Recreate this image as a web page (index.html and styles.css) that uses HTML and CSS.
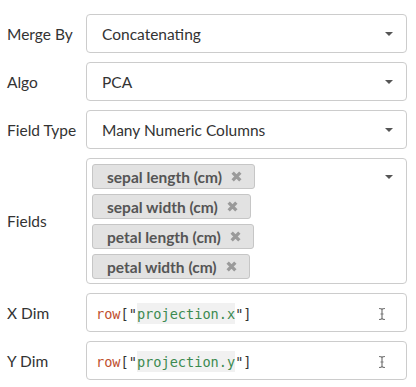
FILE: index.html
```html
<!DOCTYPE html>
<html lang="en">
    <head>
        <meta charset="utf-8"/>
        <title>Merge form</title>
        <link rel="stylesheet" href="styles.css">
    </head>
    <body>
        <div class="form">
            <label class="label">Merge By</label>
            <div class="select">
                <span>Concatenating</span>
                <i class="caret"></i>
            </div>

            <label class="label">Algo</label>
            <div class="select">
                <span>PCA</span>
                <i class="caret"></i>
            </div>

            <label class="label">Field Type</label>
            <div class="select">
                <span>Many Numeric Columns</span>
                <i class="caret"></i>
            </div>

            <label class="label">Fields</label>
            <div class="select multi">
                <div class="tags">
                    <div class="tag"><span>sepal length (cm)</span><svg class="x" viewBox="0 0 10 10"><path d="M1.5 1.5L8.5 8.5M8.5 1.5L1.5 8.5"/></svg></div>
                    <div class="tag"><span>sepal width (cm)</span><svg class="x" viewBox="0 0 10 10"><path d="M1.5 1.5L8.5 8.5M8.5 1.5L1.5 8.5"/></svg></div>
                    <div class="tag"><span>petal length (cm)</span><svg class="x" viewBox="0 0 10 10"><path d="M1.5 1.5L8.5 8.5M8.5 1.5L1.5 8.5"/></svg></div>
                    <div class="tag"><span>petal width (cm)</span><svg class="x" viewBox="0 0 10 10"><path d="M1.5 1.5L8.5 8.5M8.5 1.5L1.5 8.5"/></svg></div>
                </div>
                <i class="caret"></i>
            </div>

            <label class="label">X Dim</label>
            <div class="code-input">
                <code><span class="kw">row</span>["<span class="str">projection.x</span>"]</code>
                <svg class="ibeam" viewBox="0 0 8 14"><path d="M1 1.5C3 1.5 4 2 4 3V11C4 12 3 12.5 1 12.5M7 1.5C5 1.5 4 2 4 3V11C4 12 5 12.5 7 12.5M2.5 7H5.5"/></svg>
            </div>

            <label class="label">Y Dim</label>
            <div class="code-input">
                <code><span class="kw">row</span>["<span class="str">projection.y</span>"]</code>
                <svg class="ibeam" viewBox="0 0 8 14"><path d="M1 1.5C3 1.5 4 2 4 3V11C4 12 3 12.5 1 12.5M7 1.5C5 1.5 4 2 4 3V11C4 12 5 12.5 7 12.5M2.5 7H5.5"/></svg>
            </div>
        </div>
    </body>
</html>
```

FILE: styles.css
```css
* {
    box-sizing: border-box;
}

html, body {
    margin: 0;
    padding: 0;
    background: #fff;
    font-family: "Lato", "Open Sans", sans-serif;
    color: #333;
}

.form {
    display: grid;
    grid-template-columns: 79px 321px;
    row-gap: 9px;
    padding: 14px 9px 0 7px;
}

.label {
    display: flex;
    align-items: center;
    font-size: 15.5px;
    color: #333;
}

.select {
    display: flex;
    align-items: center;
    height: 39px;
    padding: 0 13px 0 15px;
    border: 1px solid #ccc;
    border-radius: 4px;
    font-size: 15.5px;
    color: #333;
}

.select > span {
    flex-grow: 1;
}

.caret {
    width: 0;
    height: 0;
    border-left: 4px solid transparent;
    border-right: 4px solid transparent;
    border-top: 4px solid #555;
}

.select.multi {
    height: auto;
    align-items: flex-start;
    padding: 5px 13px 4px 5px;
}

.select.multi .caret {
    margin-top: 11px;
}

.tags {
    flex-grow: 1;
    display: flex;
    flex-direction: column;
    align-items: flex-start;
    gap: 5px;
}

.tag {
    display: flex;
    align-items: center;
    gap: 9px;
    height: 25px;
    padding: 0 12px 0 14px;
    background: #e2e2e2;
    border: 1px solid #c6c6c6;
    border-radius: 3px;
    font-weight: bold;
    font-size: 15.5px;
    color: #555;
}

.tag .x {
    width: 11px;
    height: 11px;
    stroke: #9a9a9a;
    stroke-width: 3;
    fill: none;
}

.code-input {
    display: flex;
    align-items: center;
    height: 39px;
    padding: 2px 20px 0 9px;
    border: 1px solid #ccc;
    border-radius: 4px;
}

.code-input code {
    flex-grow: 1;
    font-family: "DejaVu Sans Mono", monospace;
    font-size: 13.6px;
    color: #333;
}

.kw {
    color: #c0502f;
}

.str {
    color: #3b8a50;
    background: #f1f1f1;
    padding: 3px 0 2px;
}

.ibeam {
    width: 8px;
    height: 14px;
    stroke: #777;
    stroke-width: 1.2;
    fill: none;
}
```
